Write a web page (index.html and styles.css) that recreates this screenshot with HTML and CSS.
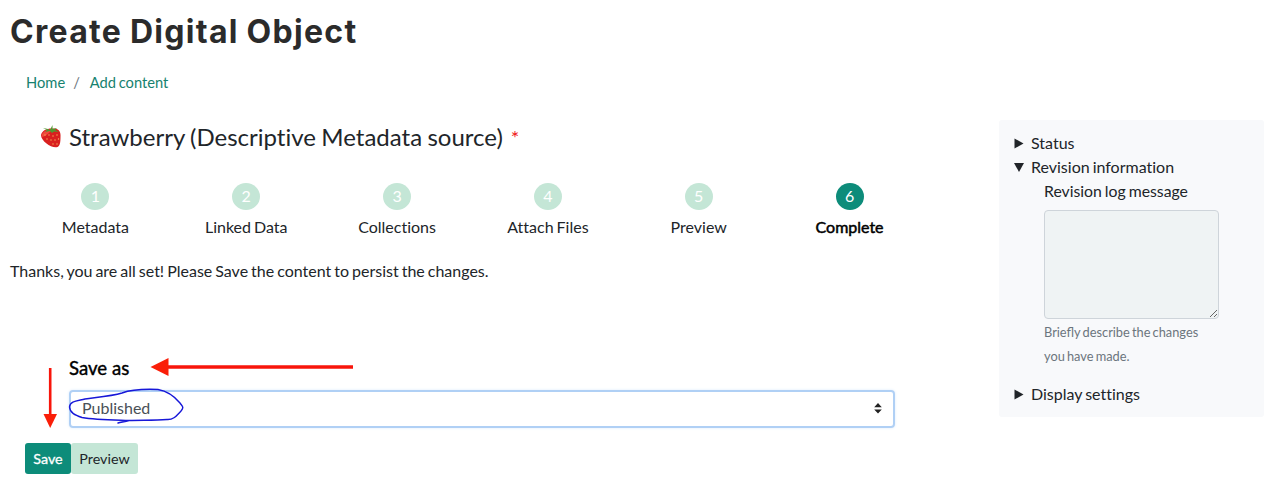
FILE: index.html
```html
<!DOCTYPE html>
<html lang="en">
<head>
<meta charset="utf-8">
<title>Create Digital Object</title>
<link rel="stylesheet" href="styles.css">
</head>
<body>
<header class="page-header">
  <h1 class="page-title">Create Digital Object</h1>
  <nav class="breadcrumb"><a class="crumb" href="#">Home</a><span class="slash">/</span><a class="crumb" href="#">Add content</a></nav>
</header>
<div class="layout">
  <main class="main">
    <h2 class="webform-title">
      <svg class="berry" viewBox="0 0 22 24" width="22" height="24">
        <path d="M1 11C2 6 8 4 13 4.500C19 4 21 8 20.500 13C20.500 18 20 23 16.500 23.300C11 24 1 17 1 11Z" fill="#d9201f"/>
        <path d="M2 10C4 6 9 5 12 6C9 9 6 12 2 13Z" fill="#ef4a3c"/>
        <path d="M3 4L8 5L10 6L12.500 1L12.500 5L17 4L15 6L19 8L14 7.500L12 9L10 7L5 8L7 6Z" fill="#4d9a31"/>
        <g fill="#f6b25a"><circle cx="5" cy="11" r=".7"/><circle cx="9" cy="11" r=".7"/><circle cx="13" cy="12" r=".7"/><circle cx="17" cy="11" r=".7"/><circle cx="7" cy="15" r=".7"/><circle cx="11" cy="16" r=".7"/><circle cx="15" cy="16" r=".7"/><circle cx="18.500" cy="15" r=".7"/><circle cx="13" cy="20" r=".7"/><circle cx="17" cy="20" r=".7"/></g>
      </svg>
      <span class="webform-label">Strawberry (Descriptive Metadata source)</span><span class="required">*</span>
    </h2>
    <ol class="steps">
      <li class="step"><span class="dot">1</span><span class="step-name">Metadata</span></li>
      <li class="step"><span class="dot">2</span><span class="step-name">Linked Data</span></li>
      <li class="step"><span class="dot">3</span><span class="step-name">Collections</span></li>
      <li class="step"><span class="dot">4</span><span class="step-name">Attach Files</span></li>
      <li class="step"><span class="dot">5</span><span class="step-name">Preview</span></li>
      <li class="step current"><span class="dot">6</span><span class="step-name">Complete</span></li>
    </ol>
    <p class="message">Thanks, you are all set! Please Save the content to persist the changes.</p>
    <div class="save-as">
      <div class="save-label">Save as</div>
      <div class="select"><span>Published</span>
        <svg width="8" height="11" viewBox="0 0 8 11"><path d="M4 0L7.800 4.200H.2ZM4 10.600L.2 6.400H7.800Z" fill="#222"/></svg>
      </div>
    </div>
    <div class="actions"><button class="btn save">Save</button><button class="btn preview">Preview</button></div>
  </main>
  <aside class="sidebar">
    <div class="summary"><svg class="marker" viewBox="0 0 10 11"><path d="M.5 .5L9.500 5.500L.5 10.500Z"/></svg>Status</div>
    <div class="summary"><svg class="marker" viewBox="0 0 10 11"><path d="M0 1H10L5 10Z"/></svg>Revision information</div>
    <div class="revision">
      <div class="revision-label">Revision log message</div>
      <div class="textarea"><svg width="9" height="9" viewBox="0 0 9 9"><path d="M1 8L8 1M5 8L8 5" stroke="#666" fill="none"/></svg></div>
      <div class="hint">Briefly describe the changes you have made.</div>
    </div>
    <div class="summary"><svg class="marker" viewBox="0 0 10 11"><path d="M.5 .5L9.500 5.500L.5 10.500Z"/></svg>Display settings</div>
  </aside>
</div>
<svg class="annotations" viewBox="0 0 1280 484">
  <path d="M353 367H168" stroke="#f8150b" stroke-width="3.600"/>
  <path d="M150.500 367L168.500 358V376Z" fill="#fa1e08"/>
  <path d="M50.200 368V415" stroke="#f8150b" stroke-width="2.600"/>
  <path d="M50.200 428L43.500 414H57Z" fill="#fa1e08"/>
  <path d="M118 423C121 422 125 422 129 420.500C114 420 96 420 82 417.500C75 415 70 413 69.500 407C70 401 77 401 85 399C100 397 112 396 122 393C133 389 146 389 158 389.500C167 391 175 397 180 403C183 407 184 407 181 411C177 415 174 420 167 419.500C154 420.500 141 420 129 420.500" stroke="#1717d8" stroke-width="1.400" fill="none" stroke-linecap="round"/>
</svg>
</body>
</html>
```
FILE: styles.css
```css
* { box-sizing: border-box; }
body {
  margin: 0;
  position: relative;
  width: 1280px;
  height: 484px;
  overflow: hidden;
  background: #fff;
  color: #212529;
  font: 400 16px/24px Lato, sans-serif;
  font-variant-ligatures: none;
  word-spacing: -1.1px;
}
.page-header { height: 119px; padding: 12px 0 0 10px; }
.page-title {
  margin: 0;
  font: 700 32px/40px Inter, sans-serif;
  letter-spacing: 1.3px;
  color: #2b2b2b;
}
.breadcrumb { display: flex; padding: 18px 0 0 16px; font-size: 14.7px; }
.crumb { color: #17826f; text-decoration: none; }
.slash { margin: 0 11px 0 8px; color: #6c757d; }
.crumb:last-child { margin-left: -1px; }
.layout { display: flex; justify-content: space-between; padding-right: 16px; }
.main { width: 925px; }
.webform-title {
  display: flex;
  align-items: center;
  height: 36px;
  margin: 0;
  padding-left: 40px;
  font-size: 24px;
  font-weight: 400;
  word-spacing: -0.8px;
}
.berry { margin: -2px 7px 0 0; }
.required { margin-left: 8px; color: #f01818; font-size: 20px; }
.steps { display: flex; list-style: none; margin: 28px 0 0 20px; padding: 0; }
.step { flex: 1; display: flex; flex-direction: column; align-items: center; }
.dot {
  width: 28px;
  height: 27px;
  border-radius: 50%;
  background: #c4e6d6;
  color: #fff;
  text-align: center;
  line-height: 26px;
}
.step-name { margin-top: 5px; }
.current .dot { background: #0d8c7a; }
.current .step-name { color: #000; -webkit-text-stroke: 0.5px #000; }
.message { margin: 20px 0 0 10px; }
.save-as { margin: 73px 30px 0 69px; }
.save-label { font-size: 18.6px; word-spacing: 0; color: #000; -webkit-text-stroke: 0.4px #000; }
.select {
  display: flex;
  align-items: center;
  justify-content: space-between;
  height: 38px;
  margin-top: 10px;
  padding: 0 11px 2px 11px;
  border: 2px solid #b0d0f5;
  border-radius: 4px;
  box-shadow: 0 0 3px #dcebfb;
  color: #495057;
}
.actions { display: flex; margin: 15px 0 0 25px; }
.btn {
  height: 31px;
  padding: 0;
  border: 0;
  border-radius: 3px;
  font: 400 14.3px/31px Lato, sans-serif;
}
.save { width: 46px; background: #0d8c7a; color: #fff; -webkit-text-stroke: 0.3px #fff; }
.preview { width: 67px; background: #c4e6d6; color: #212529; }
.sidebar {
  width: 265px;
  height: 297px;
  margin-top: 1px;
  padding: 11px 0 0 15px;
  border-radius: 3px;
  background: #f8f9fb;
}
.summary { display: flex; align-items: center; }
.marker { width: 10px; height: 11px; margin-right: 7px; fill: #212529; }
.revision { width: 175px; margin: 0 0 14px 30px; }
.revision-label { font-size: 15.8px; }
.textarea {
  display: flex;
  align-items: flex-end;
  justify-content: flex-end;
  height: 109px;
  margin: 7px 0 1px;
  border: 1px solid #ced4da;
  border-radius: 4px;
  background: #eff3f4;
}
.hint { font-size: 12.8px; color: #6c757d; font-variant-ligatures: normal; }
.annotations { position: absolute; left: 0; top: 0; width: 1280px; height: 484px; }
```
